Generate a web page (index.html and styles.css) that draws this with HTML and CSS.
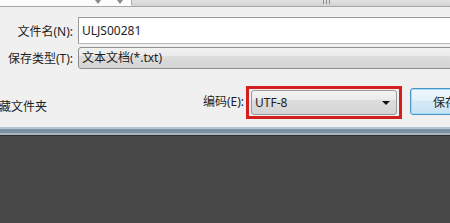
FILE: index.html
```html
<!DOCTYPE html>
<html>
<head>
	<title>保存文件</title>
	<link rel="stylesheet" href="styles.css">
</head>
<body>

<div class="dialog">
	<div class="hscroll">
		<span class="scroll-btn left"></span>
		<span class="scroll-btn right"></span>
		<div class="thumb"><span class="grip"></span></div>
	</div>
	<div class="fields">
		<div class="field-row">
			<label>文件名(N):</label>
			<div class="textbox">ULJS00281</div>
		</div>
		<div class="field-row">
			<label>保存类型(T):</label>
			<div class="combo">文本文档(*.txt)</div>
		</div>
	</div>
	<div class="footer">
		<span class="hide-folders">藏文件夹</span>
		<label class="enc-label">编码(E):</label>
		<div class="marker">
			<div class="combo enc">UTF-8<span class="caret"></span></div>
		</div>
		<button class="save-btn">保存</button>
	</div>
</div>
<div class="frame-edge"></div>
<div class="desktop"></div>

</body>
</html>
```

FILE: styles.css
```css
body {
	margin: 0;
	width: 450px;
	height: 223px;
	overflow: hidden;
	background: #474747;
	font-family: "Noto Sans", "Noto Sans CJK SC", sans-serif;
	font-size: 12px;
	color: #1e1e1e;
}
.dialog {
	height: 127px;
	background: #f0f0f0;
	overflow: hidden;
}
.hscroll {
	display: flex;
	height: 6px;
	background: #fcfcfc;
	border-bottom: 1px solid #a6a6a6;
}
.scroll-btn {
	width: 0;
	height: 0;
	border-left: 3px solid transparent;
	border-right: 3px solid transparent;
}
.scroll-btn.left {
	margin-left: 95px;
	border-top: 4px solid #8a8a8a;
}
.scroll-btn.right {
	margin-left: 16px;
	border-top: 4px solid #8a8a8a;
}
.thumb {
	flex: 1;
	margin-left: 8px;
	margin-right: -70px;
	background: linear-gradient(#e2e2e2, #d2d2d2);
	border-left: 1px solid #a8a8a8;
	border-radius: 0 0 0 2px;
	display: flex;
	justify-content: center;
}
.grip {
	width: 7px;
	height: 4px;
	background: repeating-linear-gradient(90deg, #8c8c8c 0 1px, transparent 1px 3px);
}
.fields {
	padding-top: 10px;
	display: flex;
	flex-direction: column;
	gap: 3px;
}
.field-row {
	display: flex;
	align-items: center;
}
.field-row label {
	width: 73px;
	margin-right: 5px;
	text-align: right;
	white-space: nowrap;
}
.textbox {
	flex: 1;
	height: 25px;
	line-height: 25px;
	padding-left: 3px;
	margin-right: -10px;
	background: #fff;
	border: 1px solid #9a9a9a;
	border-bottom-color: #b8b8b8;
}
.combo {
	flex: 1;
	height: 20px;
	line-height: 20px;
	padding-left: 3px;
	margin-right: -10px;
	border: 1px solid #8e8f8f;
	border-radius: 3px;
	background: linear-gradient(#f2f2f2 0%, #ebebeb 38%, #dddddd 40%, #d4d4d4 100%);
}
.footer {
	display: flex;
	align-items: flex-start;
}
.footer > * {
	flex: none;
}
.hide-folders {
	width: 204px;
	margin-left: -1px;
	margin-top: 30px;
	line-height: 16px;
	white-space: nowrap;
}
.enc-label {
	width: 43px;
	margin-top: 25px;
	line-height: 16px;
	white-space: nowrap;
}
.marker {
	margin-top: 17px;
	width: 146px;
	padding: 1px 2px 1px 2px;
	border: 3px solid #d3201d;
}
.combo.enc {
	position: relative;
	height: 23px;
	line-height: 23px;
	margin-right: 0;
	padding-left: 3px;
	border-color: #9a9a9a;
}
.caret {
	position: absolute;
	right: 6px;
	top: 10px;
	width: 0;
	height: 0;
	border-left: 4px solid transparent;
	border-right: 4px solid transparent;
	border-top: 4px solid #111;
}
.save-btn {
	margin-top: 19px;
	margin-left: 8px;
	width: 70px;
	height: 27px;
	padding: 0;
	font: inherit;
	color: #1e1e1e;
	border: 1px solid #4b94c8;
	border-radius: 3px;
	box-shadow: inset 0 0 0 1px #a6dcf6;
	background: linear-gradient(#eef7fc 0%, #e3f1fa 45%, #d3e9f7 50%, #c8e2f4 100%);
}
.frame-edge {
	height: 9px;
	background: linear-gradient(#b7c4ce 0 2px, #7a90a2 2px 6px, #a9b6c0 6px 8px, #2f2f2f 8px 9px);
}
.desktop {
	height: 87px;
	background: #474747;
}
```
